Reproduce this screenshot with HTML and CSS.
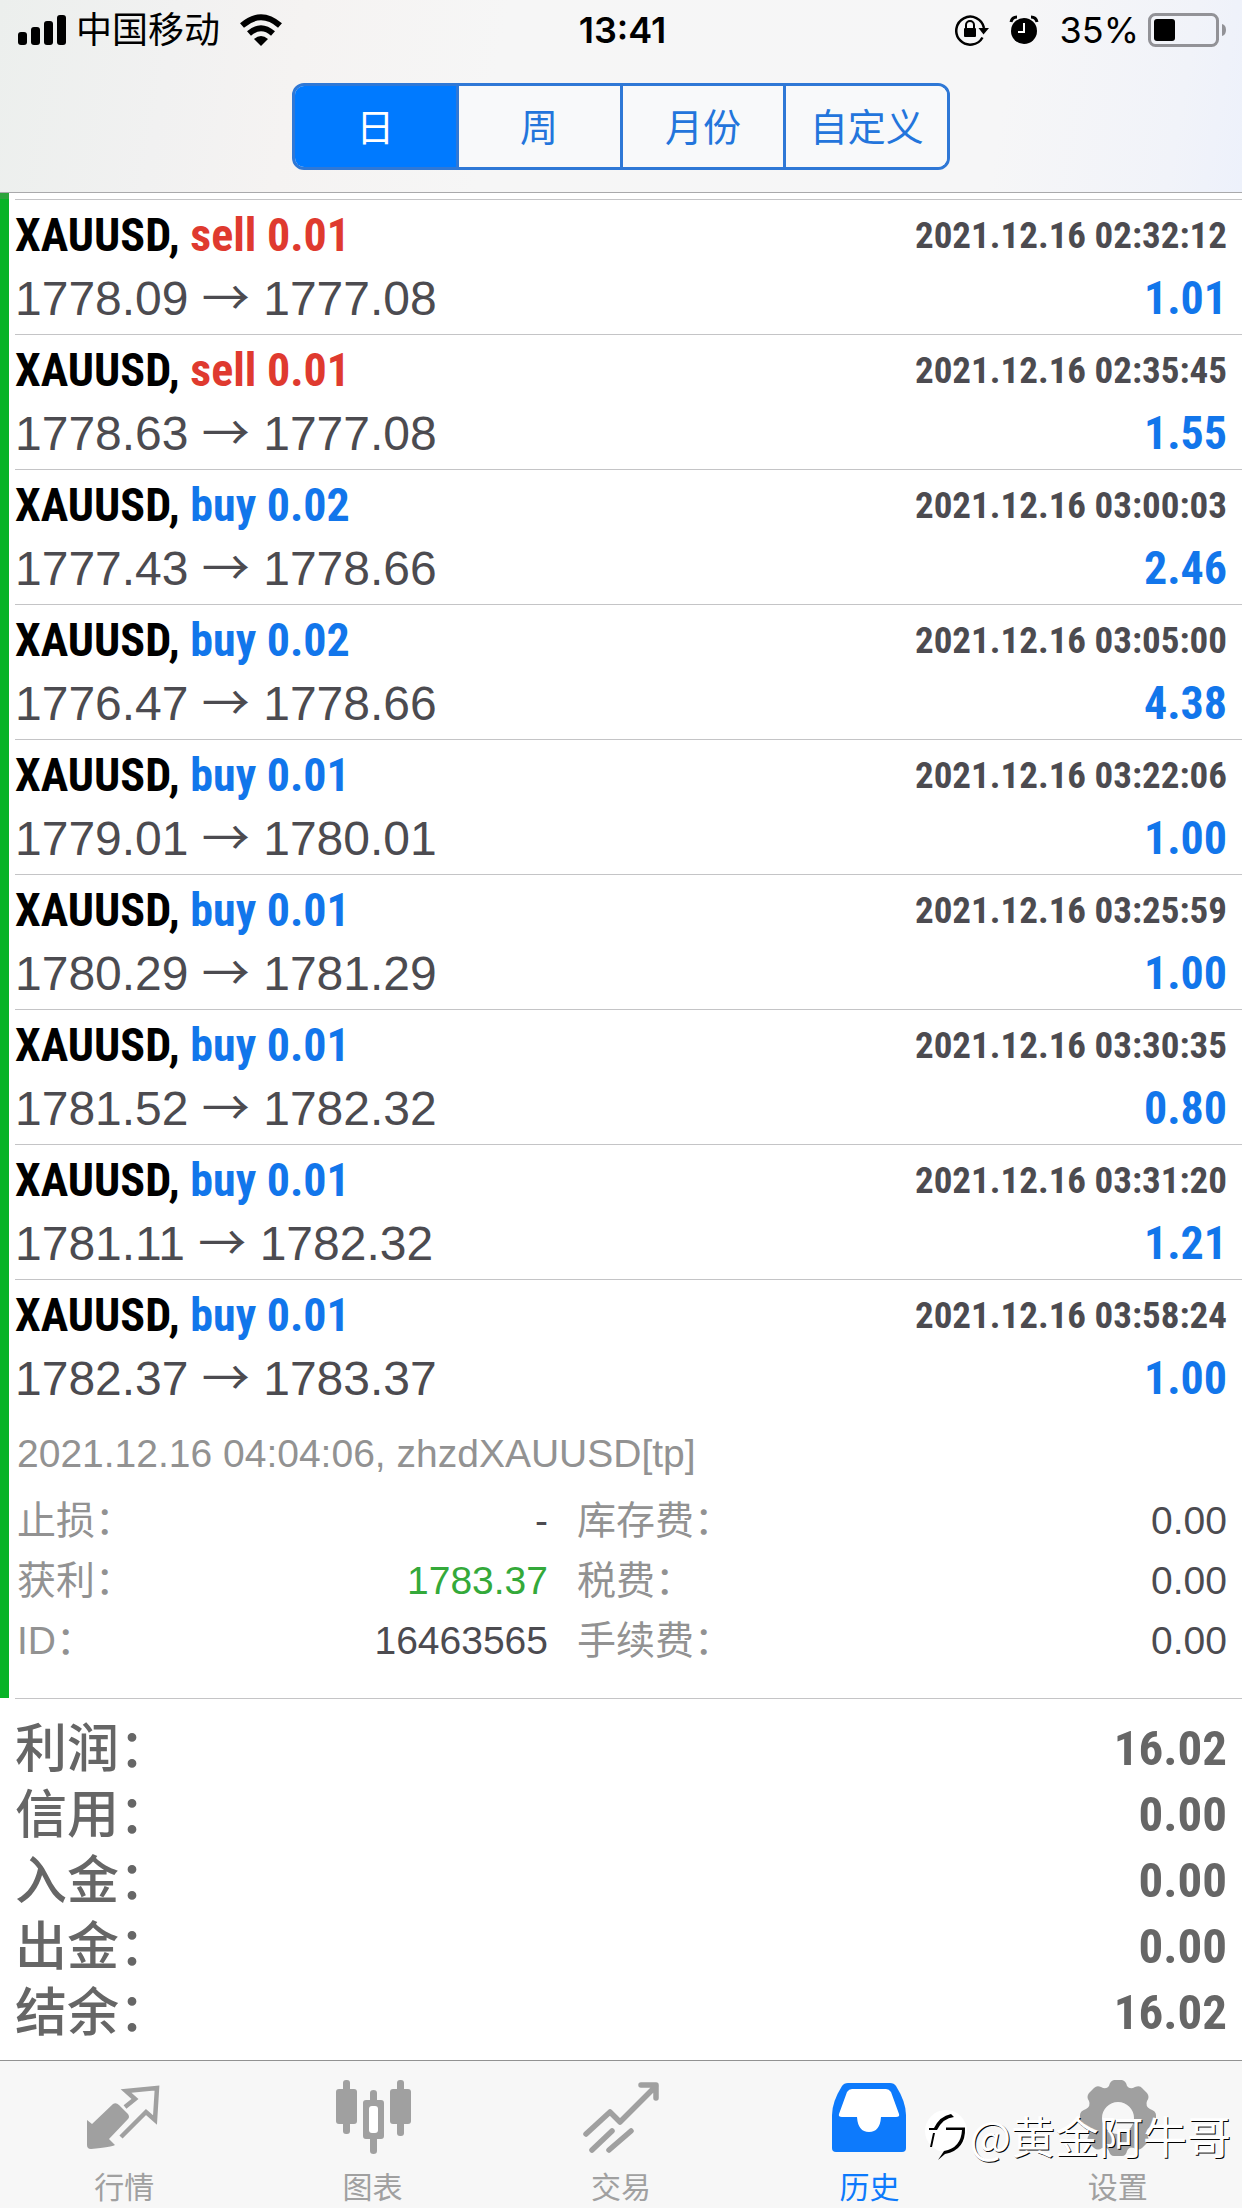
FILE: index.html
```html
<!DOCTYPE html>
<html lang="zh-CN">
<head>
<meta charset="utf-8">
<meta name="viewport" content="width=device-width, initial-scale=1">
<title>历史</title>
<link rel="stylesheet" href="styles.css">
</head>
<body>
<header class="top">
  <div class="status">
    <div class="status-side">
      <svg class="signal" width="48" height="32" viewBox="0 0 48 32" aria-hidden="true"><rect x="0" y="18" width="9" height="13" rx="3"/><rect x="13" y="13" width="9" height="18" rx="3"/><rect x="26" y="7" width="9" height="24" rx="3"/><rect x="39" y="1" width="9" height="30" rx="3"/></svg>
      <span class="carrier">中国移动</span>
      <svg class="wifi" width="42" height="32" viewBox="0 0 42 32" aria-hidden="true"><g fill="none" stroke="#000" stroke-width="6"><path d="M2 11.500Q21-5 40 11.500"/><path d="M9 19.500Q21 9 33 19.500"/></g><path d="M14 25Q21 19 28 25L21 32Z"/></svg>
    </div>
    <time class="clock">13:41</time>
    <div class="status-side status-right">
      <svg width="34" height="32" viewBox="0 0 34 32" aria-hidden="true"><path d="M27.500 23.500A14 14 0 1 1 29 14" fill="none" stroke="#000" stroke-width="2.500"/><path d="M23.500 14H34L28.500 20.500Z"/><rect x="9" y="14" width="12" height="9" rx="1"/><path d="M11 14V11a4 4 0 0 1 8 0v3" fill="none" stroke="#000" stroke-width="2"/></svg>
      <svg class="alarm" width="30" height="30" viewBox="0 0 30 30" aria-hidden="true"><circle cx="15" cy="16" r="13"/><path d="M2 7Q3 2 8 2M28 7Q27 2 22 2" fill="none" stroke="#000" stroke-width="3"/><path d="M15 8V17H9" fill="none" stroke="#fff" stroke-width="2"/></svg>
      <span class="percent">35%</span>
      <svg width="79" height="34" viewBox="0 0 79 34" aria-hidden="true"><rect x="1.500" y="1.500" width="68" height="31" rx="6" fill="none" stroke="#929297" stroke-width="3"/><rect x="6" y="6" width="21" height="22" rx="3"/><path d="M74 11q4 1 4 6t-4 6z" fill="#929297"/></svg>
    </div>
  </div>
  <nav class="periods" aria-label="时间范围">
    <button class="period period-on" type="button" aria-pressed="true">日</button>
    <button class="period" type="button" aria-pressed="false">周</button>
    <button class="period" type="button" aria-pressed="false">月份</button>
    <button class="period" type="button" aria-pressed="false">自定义</button>
  </nav>
</header>

<main class="content">
  <ul class="deals">
    <li class="deal-gap"></li>
    <li class="deal"><div class="deal-body"><div class="line"><h2 class="symbol">XAUUSD, <span class="sell">sell 0.01</span></h2><time class="date">2021.12.16 02:32:12</time></div><div class="line"><span class="price">1778.09 <span class="arrow">→</span> 1777.08</span><span class="profit">1.01</span></div></div></li>
    <li class="deal"><div class="deal-body"><div class="line"><h2 class="symbol">XAUUSD, <span class="sell">sell 0.01</span></h2><time class="date">2021.12.16 02:35:45</time></div><div class="line"><span class="price">1778.63 <span class="arrow">→</span> 1777.08</span><span class="profit">1.55</span></div></div></li>
    <li class="deal"><div class="deal-body"><div class="line"><h2 class="symbol">XAUUSD, <span class="buy">buy 0.02</span></h2><time class="date">2021.12.16 03:00:03</time></div><div class="line"><span class="price">1777.43 <span class="arrow">→</span> 1778.66</span><span class="profit">2.46</span></div></div></li>
    <li class="deal"><div class="deal-body"><div class="line"><h2 class="symbol">XAUUSD, <span class="buy">buy 0.02</span></h2><time class="date">2021.12.16 03:05:00</time></div><div class="line"><span class="price">1776.47 <span class="arrow">→</span> 1778.66</span><span class="profit">4.38</span></div></div></li>
    <li class="deal"><div class="deal-body"><div class="line"><h2 class="symbol">XAUUSD, <span class="buy">buy 0.01</span></h2><time class="date">2021.12.16 03:22:06</time></div><div class="line"><span class="price">1779.01 <span class="arrow">→</span> 1780.01</span><span class="profit">1.00</span></div></div></li>
    <li class="deal"><div class="deal-body"><div class="line"><h2 class="symbol">XAUUSD, <span class="buy">buy 0.01</span></h2><time class="date">2021.12.16 03:25:59</time></div><div class="line"><span class="price">1780.29 <span class="arrow">→</span> 1781.29</span><span class="profit">1.00</span></div></div></li>
    <li class="deal"><div class="deal-body"><div class="line"><h2 class="symbol">XAUUSD, <span class="buy">buy 0.01</span></h2><time class="date">2021.12.16 03:30:35</time></div><div class="line"><span class="price">1781.52 <span class="arrow">→</span> 1782.32</span><span class="profit">0.80</span></div></div></li>
    <li class="deal"><div class="deal-body"><div class="line"><h2 class="symbol">XAUUSD, <span class="buy">buy 0.01</span></h2><time class="date">2021.12.16 03:31:20</time></div><div class="line"><span class="price">1781.11 <span class="arrow">→</span> 1782.32</span><span class="profit">1.21</span></div></div></li>
    <li class="deal"><div class="deal-body"><div class="line"><h2 class="symbol">XAUUSD, <span class="buy">buy 0.01</span></h2><time class="date">2021.12.16 03:58:24</time></div><div class="line"><span class="price">1782.37 <span class="arrow">→</span> 1783.37</span><span class="profit">1.00</span></div>
      <div class="details">
        <p class="comment">2021.12.16 04:04:06, zhzdXAUUSD[tp]</p>
        <div class="detail-columns">
          <dl class="detail-list">
            <div class="detail"><dt>止损：</dt><dd>-</dd></div>
            <div class="detail"><dt>获利：</dt><dd class="reached">1783.37</dd></div>
            <div class="detail"><dt>ID：</dt><dd>16463565</dd></div>
          </dl>
          <dl class="detail-list">
            <div class="detail"><dt>库存费：</dt><dd>0.00</dd></div>
            <div class="detail"><dt>税费：</dt><dd>0.00</dd></div>
            <div class="detail"><dt>手续费：</dt><dd>0.00</dd></div>
          </dl>
        </div>
      </div>
    </div></li>
  </ul>
  <dl class="summary">
    <div class="total"><dt>利润：</dt><dd>16.02</dd></div>
    <div class="total"><dt>信用：</dt><dd>0.00</dd></div>
    <div class="total"><dt>入金：</dt><dd>0.00</dd></div>
    <div class="total"><dt>出金：</dt><dd>0.00</dd></div>
    <div class="total"><dt>结余：</dt><dd>16.02</dd></div>
  </dl>
</main>

<nav class="tabs" aria-label="主菜单">
  <a class="tab" href="#quotes"><svg class="tab-icon" viewBox="0 0 76 76" aria-hidden="true"><path d="M1 40L6 44 27 24Q30 22 33 25L42 34Q44 37 42 39L23 59 29 65Q26 67 5 69 1 69 1 65Z"/><path d="M39 27L49 19 40 11 71 8 69 40 60 32 35 57" fill="none" stroke="currentColor" stroke-width="4.500"/></svg>行情</a>
  <a class="tab" href="#charts"><svg class="tab-icon" viewBox="0 0 76 76" aria-hidden="true"><rect x="1" y="9" width="21" height="35" rx="3"/><rect x="8" y="0" width="7" height="54" rx="3"/><rect x="55" y="9" width="21" height="35" rx="3"/><rect x="62" y="0" width="7" height="56" rx="3"/><path d="M28 23q0-3 3-3h4v-7q0-3 3.500-3t3.500 3v7h4q3 0 3 3v33q0 3-3 3h-4v12q0 3-3.500 3t-3.500-3V59h-4q-3 0-3-3Z"/><rect x="34" y="26" width="9" height="27" rx="3" fill="#fff"/></svg>图表</a>
  <a class="tab" href="#trade"><svg class="tab-icon" viewBox="0 0 76 76" aria-hidden="true"><g fill="none" stroke="currentColor" stroke-width="5.500" stroke-linecap="round" stroke-linejoin="round"><path d="M3 54L27 32 37 42 73 6M58 5H73V18M9 70L29 51M26 70L48 51"/></g></svg>交易</a>
  <a class="tab tab-on" href="#history" aria-current="page"><svg class="tab-icon" viewBox="0 0 76 76" aria-hidden="true"><path d="M17 3H59Q63 3 65 6 75 22 75 35V68Q75 72 71 72H5Q1 72 1 68V35Q1 22 11 6 13 3 17 3Z"/><path d="M21 9H55Q58 9 60 12L68 34Q69 37 65 37H50Q49 52 38 52T26 37H11Q7 37 8 34L16 12Q18 9 21 9Z" fill="#fff"/></svg>历史</a>
  <a class="tab" href="#settings"><svg class="tab-icon" viewBox="0 0 76 76" aria-hidden="true"><path fill-rule="evenodd" d="M34 0h8q4 1 5 6 3 4 8 1 5-2 7 1l5 5q3 4 0 8-2 5 3 8 6 2 6 6v6q0 4-6 6-5 3-3 8 3 4 0 8l-5 5q-4 3-8 0-5-2-7 3-1 5-5 5h-8q-4 0-5-5-2-5-7-3-4 3-8 0l-5-5q-3-4 0-8 2-5-3-8-6-2-6-6v-6q0-4 6-6 5-3 3-8-3-4 0-8l5-5q3-3 7-1 5 3 8-1 1-5 5-6ZM38 22a16 16 0 1 0 0 32 16 16 0 0 0 0-32Z"/></svg>设置</a>
  <div class="watermark">
    <svg class="watermark-logo" width="44" height="54" viewBox="0 0 44 54" aria-hidden="true"><circle cx="23" cy="23" r="21" fill="#fff"/><path d="M6 20H11Q17 8 28 6L31 9Q20 10 14 22H6ZM10 25H12L9 39H7ZM23 19.500H42Q43 42 22 46L15 52 21 43Q38 40 39 22H23Z" fill="#000"/></svg><span>@黄金阿牛哥</span>
  </div>
</nav>
</body>
</html>
```
FILE: styles.css
```css
* { box-sizing: border-box; margin: 0; padding: 0; }

body {
  display: flex;
  flex-direction: column;
  min-height: 100vh;
  background: #fff;
  color: #4c4b50;
  font-family: "Liberation Sans", "Noto Sans CJK SC", sans-serif;
}

svg { display: block; flex: none; fill: currentColor; }
ul { list-style: none; }

/* Status bar and period switch */
.top {
  padding-bottom: 22px;
  border-bottom: 1px solid #a9a9ab;
  background: linear-gradient(100deg, #ecefed 0%, #f1f1f1 14%, #f5f3f2 24%, #f6f6f6 40%, #f6f6f7 80%, #f1f3f9 94%, #edf1fb 100%);
}

.status {
  display: grid;
  grid-template-columns: 1fr auto 1fr;
  align-items: center;
  height: 60px;
  margin-bottom: 23px;
  padding: 0 15px 0 18px;
  color: #000;
  font-family: Inter, "Noto Sans CJK SC", sans-serif;
}

.status-side { display: flex; align-items: center; }
.status-right { justify-content: flex-end; }
.carrier { margin: 0 20px 0 10px; font-size: 36px; line-height: 60px; }
.clock { font-size: 36px; font-weight: 600; line-height: 60px; }
.alarm { margin: 0 21px 0 20px; }
.percent { margin-right: 9px; font-size: 36px; }

.periods {
  display: flex;
  width: 53%;
  height: 87px;
  margin: 0 auto;
  overflow: hidden;
  border: 3px solid #2f78d6;
  border-radius: 12px;
}

.period {
  flex: 1;
  padding-bottom: 4px;
  border: 0;
  border-left: 3px solid #2f78d6;
  background: #f8f9fa;
  color: #2375dc;
  font: 400 38px "Noto Sans CJK SC", sans-serif;
}

.period:first-child { border-left: 0; }
.period-on { background: #007aff; color: #fff; }

/* Closed deals */
.content { flex: 1; }
.deal-gap { height: 6px; border-left: 9px solid #2da43c; }
.deal { padding-left: 6px; border-left: 9px solid #08b327; }
.deal-body { padding: 4px 15px 4px 0; border-top: 1px solid #c4c4c6; }

.line {
  display: flex;
  align-items: center;
  justify-content: space-between;
  height: 63px;
  line-height: 63px;
  white-space: nowrap;
}

.symbol, .profit, .date, .total dd { font-family: "Roboto Condensed", "Liberation Sans", sans-serif; font-weight: 700; }
.symbol { color: #000; font-size: 46px; }
.date { font-size: 37px; }
.sell { color: #df3a2f; }
.buy, .profit { color: #1276eb; }
.price { font-size: 48px; }
.profit { font-size: 46px; }
.arrow { font-family: "Noto Sans CJK SC", sans-serif; line-height: 1; }

.details { padding: 14px 0 23px 2px; color: #929292; font-size: 39px; line-height: 60px; }
.comment { margin-bottom: 7px; }
.detail-columns { display: grid; grid-template-columns: 531px 1fr; column-gap: 29px; }
.detail { display: flex; justify-content: space-between; height: 60px; }
.detail dd { color: #4c4b50; }
.detail .reached { color: #34a93a; }

/* Totals */
.summary { margin-left: 15px; padding: 17px 15px 13px 0; border-top: 1px solid #c4c4c6; color: #666; }
.total { display: flex; justify-content: space-between; height: 66px; line-height: 66px; }
.total dt { font-size: 52px; font-weight: 500; }
.total dd { font-size: 49px; }

/* Bottom tabs */
.tabs {
  position: relative;
  display: grid;
  grid-template-columns: repeat(5, 1fr);
  height: 148px;
  border-top: 1px solid #929292;
  background: #f7f7f7;
}

.tab {
  display: flex;
  flex-direction: column;
  align-items: center;
  padding-top: 19px;
  color: #a0a0a0;
  font-size: 30px;
  line-height: 44px;
  text-decoration: none;
}

.tab-icon { width: 76px; height: 76px; margin-bottom: 10px; }
.tab-on { color: #0d7afc; }

/* Author mark laid over the tab bar */
.watermark {
  position: absolute;
  right: 11px;
  top: 44px;
  display: flex;
  align-items: center;
  color: #fff;
  font: 400 44px/60px "Noto Sans CJK SC", sans-serif;
  text-shadow: 1px 1px 0 #000;
}

.watermark-logo { margin-right: 2px; }
```
